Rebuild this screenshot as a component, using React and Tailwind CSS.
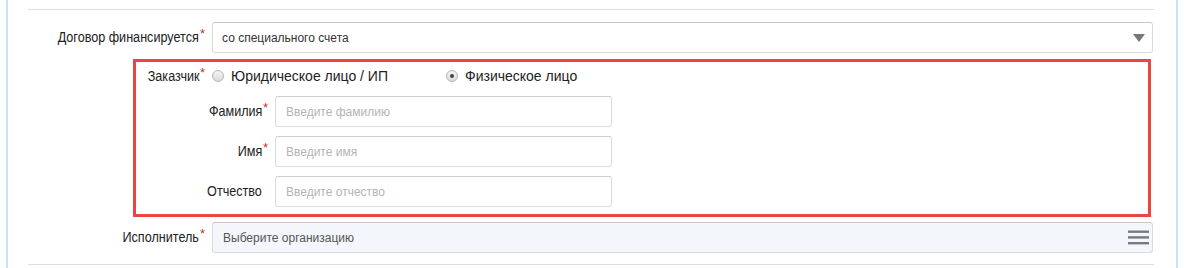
import React from "react";

const Label = ({ children, required, className = "" }) => (
  <div className={"flex items-center justify-end text-[14px] text-[#222] " + className}>
    <span className="inline-block origin-right scale-x-90 whitespace-nowrap">{children}</span>
    <span className="relative -top-[4px] w-[7px] pl-[1px] text-[13px] leading-none text-[#c0392b]">
      {required ? "*" : ""}
    </span>
  </div>
);

const Radio = ({ checked, label }) => (
  <label className="flex items-center gap-[7px]">
    <span className="flex h-[12px] w-[12px] items-center justify-center rounded-full border border-[#b5b5b5] bg-gradient-to-b from-[#f4f4f4] to-[#dcdcdc]">
      {checked && <span className="h-[4px] w-[4px] rounded-full bg-[#444]" />}
    </span>
    <span className="text-[14px] text-[#222]">{label}</span>
  </label>
);

const TextInput = ({ placeholder }) => (
  <div className="flex h-[31px] w-[337px] items-center rounded-[3px] border border-[#dcdcdc] border-t-[#cfcfcf] bg-white pl-[10px] text-[12px] text-[#b4b4b4]">
    {placeholder}
  </div>
);

export default function App() {
  return (
    <div className="h-[268px] w-[1184px] bg-white font-['Liberation_Sans',Arial,sans-serif]">
      <div className="ml-[6px] h-[268px] w-[1172px] border-x-2 border-[#c6e2f9] pl-[20px] pr-[22px] pt-[9px]">
        <div className="border-t border-[#dedede] pt-[12px]">
          {/* Договор финансируется */}
          <div className="flex h-[31px] items-stretch gap-[6px] pr-px">
            <Label required className="w-[178px]">Договор финансируется</Label>
            <div className="flex flex-1 items-center justify-between rounded-[3px] border border-[#dadada] border-t-[#c8c8c8] bg-white pl-[9px] pr-[7px]">
              <span className="text-[12px] text-[#333]">со специального счета</span>
              <svg width="12" height="8" viewBox="0 0 12 8">
                <path d="M0 0 L12 0 L6 8 Z" fill="#777" />
              </svg>
            </div>
          </div>

          {/* Заказчик */}
          <div className="ml-[105px] mr-[3px] mt-[6px] border-[3px] border-[#e8473f] pb-[7px]">
            <div className="flex h-[28px] items-center">
              <Label required className="w-[70px]">Заказчик</Label>
              <div className="ml-[6px] w-[234px]">
                <Radio label="Юридическое лицо / ИП" />
              </div>
              <Radio checked label="Физическое лицо" />
            </div>
            <div className="mt-[6px] flex flex-col gap-[9px]">
              {[
                ["Фамилия", true, "Введите фамилию"],
                ["Имя", true, "Введите имя"],
                ["Отчество", false, "Введите отчество"],
              ].map(([name, req, ph]) => (
                <div key={name} className="flex h-[31px] items-stretch gap-[6px]">
                  <Label required={req} className="w-[133px]">{name}</Label>
                  <TextInput placeholder={ph} />
                </div>
              ))}
            </div>
          </div>

          {/* Исполнитель */}
          <div className="mt-[5px] flex h-[31px] items-stretch gap-[6px] pr-px">
            <Label required className="w-[178px]">Исполнитель</Label>
            <div className="flex flex-1 items-center justify-between rounded-[3px] border border-[#dadada] border-t-[#c8c8c8] bg-[#f3f6fa] pl-[10px] pr-[3px]">
              <span className="text-[12px] text-[#555]">Выберите организацию</span>
              <svg width="21" height="15" viewBox="0 0 21 15">
                <rect x="0" y="0.5" width="21" height="2.4" fill="#7a7a7a" />
                <rect x="0" y="6.2" width="21" height="2.4" fill="#7a7a7a" />
                <rect x="0" y="12" width="21" height="2.4" fill="#7a7a7a" />
              </svg>
            </div>
          </div>

          <div className="mt-[11px] border-t border-[#dcdde3]" />
        </div>
      </div>
    </div>
  );
}
